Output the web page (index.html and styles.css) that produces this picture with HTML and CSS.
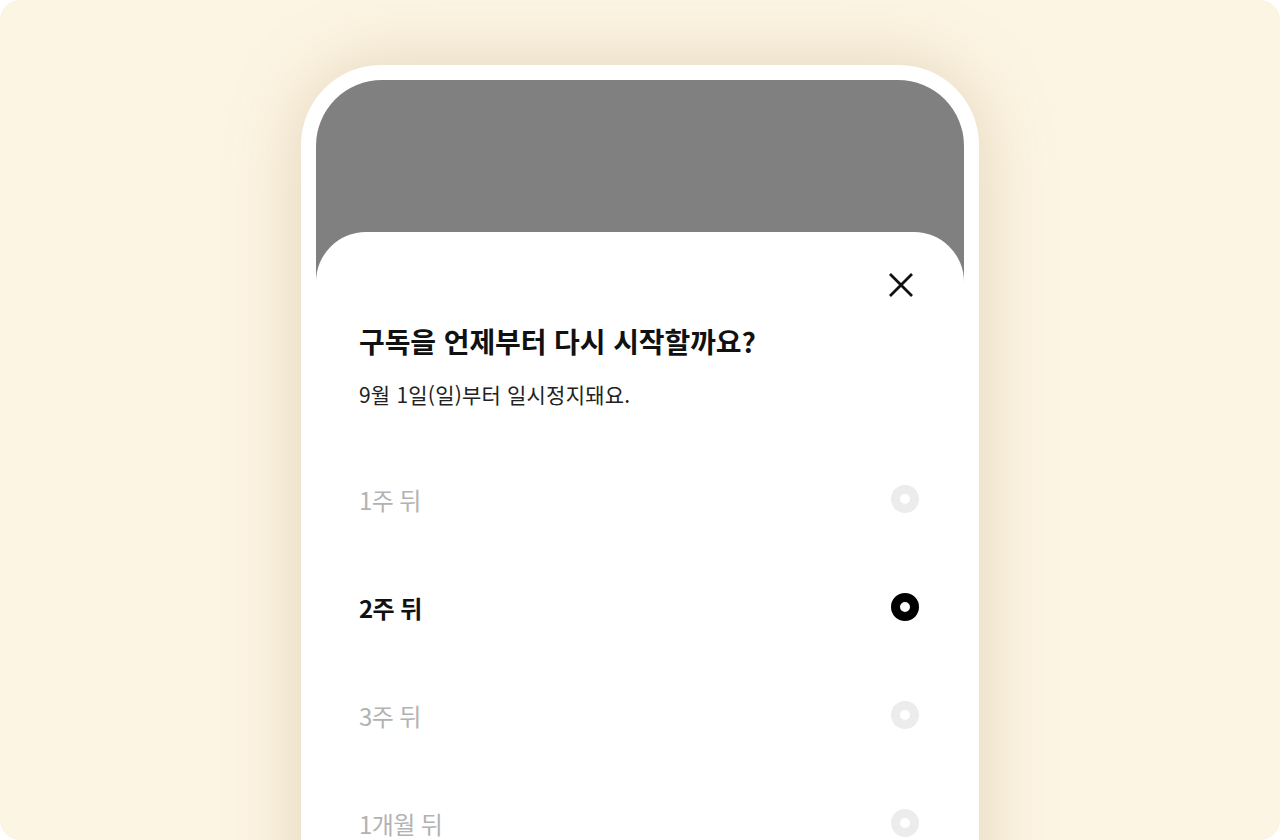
FILE: index.html
```html
<!DOCTYPE html>
<html lang="ko">
<head>
    <meta charset="UTF-8">
    <meta name="viewport" content="width=device-width, initial-scale=1.0">
    <title>구독 재시작</title>
    <link rel="stylesheet" href="styles.css">
</head>
<body>

    <div class="canvas">
        <div class="phone">
            <div class="screen">
                <div class="sheet">
                    <div class="close-row">
                        <svg class="close" width="26" height="26" viewBox="0 0 26 26">
                            <path d="M2 2 L24 24 M24 2 L2 24" stroke="#111" stroke-width="2.8" fill="none"/>
                        </svg>
                    </div>
                    <h1 class="title">구독을 언제부터 다시 시작할까요?</h1>
                    <p class="subtitle">9월 1일(일)부터 일시정지돼요.</p>

                    <ul class="options">
                        <li class="option">
                            <span>1주 뒤</span>
                            <span class="radio"></span>
                        </li>
                        <li class="option selected">
                            <span>2주 뒤</span>
                            <span class="radio"></span>
                        </li>
                        <li class="option">
                            <span>3주 뒤</span>
                            <span class="radio"></span>
                        </li>
                        <li class="option">
                            <span>1개월 뒤</span>
                            <span class="radio"></span>
                        </li>
                    </ul>
                </div>
            </div>
        </div>
    </div>

</body>
</html>
```

FILE: styles.css
```css
body {
    margin: 0;
    background-color: #fff;
    font-family: "Noto Sans CJK KR", "Noto Sans", sans-serif;
}

/* Cream backdrop */
.canvas {
    width: 1280px;
    height: 840px;
    background-color: #fdf5e4;
    border-radius: 20px;
    overflow: hidden;
    display: flex;
    justify-content: center;
}

/* Phone frame */
.phone {
    margin-top: 65px;
    width: 648px;
    height: 900px;
    border: 15px solid #fff;
    border-bottom: none;
    border-radius: 80px 80px 0 0;
    background-color: #fff;
    box-shadow: 0 0 80px rgba(130, 95, 30, 0.22);
}

.screen {
    height: 100%;
    background-color: #808080;
    border-radius: 66px 66px 0 0;
    padding-top: 152px;
    box-sizing: border-box;
}

/* Bottom sheet */
.sheet {
    height: 100%;
    background-color: #fff;
    border-radius: 50px 50px 0 0;
    padding: 40px 45px 0 43px;
}

.close-row {
    display: flex;
    justify-content: flex-end;
    height: 26px;
}

.close {
    margin-right: 5px;
}

.title {
    margin: 25px 0 0;
    font-size: 28px;
    line-height: 36px;
    font-weight: 700;
    letter-spacing: -0.1px;
    color: #111;
}

.subtitle {
    margin: 21px 0 0;
    font-size: 21px;
    line-height: 28px;
    letter-spacing: 0.2px;
    color: #222;
}

.options {
    list-style: none;
    margin: 37px 0 0;
    padding: 0;
}

.option {
    height: 108px;
    display: flex;
    justify-content: space-between;
    align-items: center;
    font-size: 24px;
    letter-spacing: -0.6px;
    color: #b2b2b2;
}

.option.selected {
    color: #111;
    font-weight: 700;
}

.radio {
    width: 28px;
    height: 28px;
    box-sizing: border-box;
    border-radius: 50%;
    border: 9px solid #ececec;
    background-color: #fff;
}

.option.selected .radio {
    border-color: #000;
}
```
